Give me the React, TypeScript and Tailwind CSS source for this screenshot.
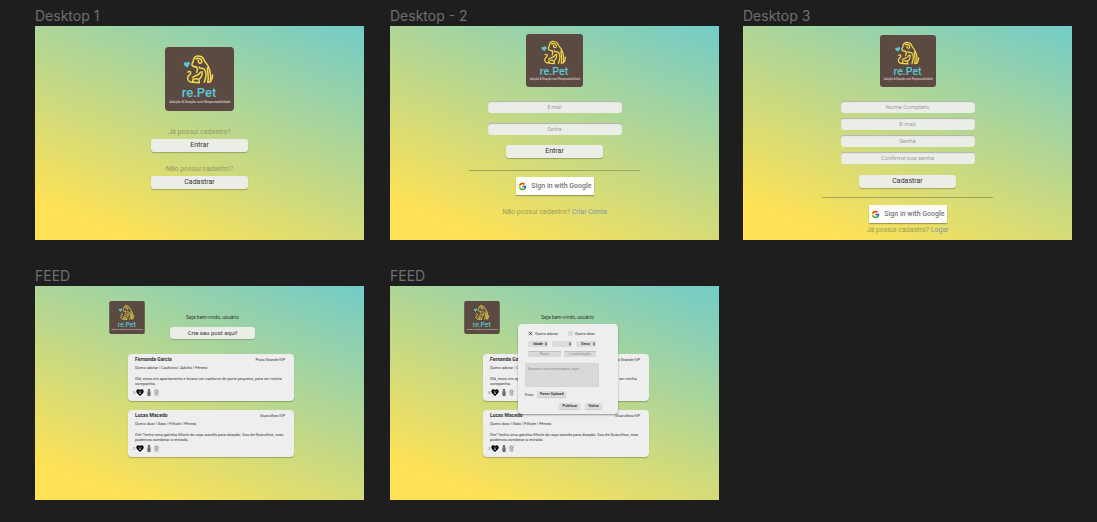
import type { ReactNode } from "react";
import { FcGoogle } from "react-icons/fc";

function Logo({ className }: { className: string }) {
  return (
    <svg viewBox="0 0 207 192" className={className} role="img" aria-label="re.Pet">
      <rect width="207" height="192" rx="11" fill="#5a4a42" />
      <path
        d="M67 62 L57 54 C54 47 61 43 65 48 C68 41 77 44 74 52 Z"
        fill="#5cc8d7"
      />
      <g fill="none" stroke="#f5d949" strokeWidth="4.500" strokeLinecap="round" strokeLinejoin="round">
        <path d="M95 60 C88 60 79 57 81 51 C82 47 85 46 85 40 C87 30 94 26 102 27 C112 28 116 34 118 41 C132 56 140 76 136 104 L128 106 C133 86 127 76 127 62" />
        <path d="M143 84 C143 93 140 100 136 104" />
        <path d="M93 36 C102 31 112 36 110 46 C106 52 98 48 100 40" />
        <path d="M93 60 C99 64 98 70 95 76 M103 60 C103 68 111 60 118 67 C126 76 124 90 118 106" />
        <path d="M69 75 C75 70 81 77 74 83 C65 89 66 100 76 105 L103 107 C104 97 96 93 88 96 C79 99 83 107 92 106" />
        <path d="M82 92 C88 84 103 86 106 76 L111 74 C113 84 107 93 101 97" />
      </g>
      <text x="102" y="149" textAnchor="middle" fill="#5cc8d7" fontFamily="Roboto, sans-serif" fontWeight="500" fontSize="39">
        re.Pet
      </text>
      <text x="105" y="168" textAnchor="middle" fill="#e4dfda" fontFamily="Roboto, sans-serif" fontSize="10">
        Adoção &amp; Doação com Responsabilidade
      </text>
    </svg>
  );
}

function Artboard({ title, className, children }: { title: string; className: string; children: ReactNode }) {
  return (
    <section className={className}>
      <h2 className="h-[18px] font-[Inter,sans-serif] text-[14px] leading-[15px] text-[#6f6f6f]">{title}</h2>
      <div className="aspect-[329/214] bg-[linear-gradient(21deg,#ffe255_11%,#72ccc8_100%)]">{children}</div>
    </section>
  );
}

function ActionButton({ children }: { children: string }) {
  return (
    <button className="h-[13px] w-[97px] rounded-[3px] bg-[#ebede7] text-[7px] leading-[13px] text-[#333333] shadow-[0_1px_1px_rgba(0,0,0,0.25)]">
      {children}
    </button>
  );
}

function Field({ label, type = "text", small = false }: { label: string; type?: string; small?: boolean }) {
  return (
    <input
      type={type}
      aria-label={label}
      placeholder={label}
      className={`block h-[12px] w-[134px] rounded-[3px] bg-[#ebede7] text-center leading-[12px] shadow-[inset_0_1px_1px_rgba(0,0,0,0.25)] outline-none placeholder:text-[#9d9e9a] ${
        small ? "text-[5px]" : "text-[6px]"
      }`}
    />
  );
}

function GoogleButton() {
  return (
    <button className="flex h-[18px] w-[78px] items-center justify-between bg-white pr-[2px] pl-[2px] text-[7px] font-medium text-[#757575] shadow-[0_1px_1px_rgba(0,0,0,0.3)]">
      <FcGoogle className="size-[9px]" />
      Sign in with Google
    </button>
  );
}

function AccountPrompt({ text, link }: { text: string; link: string }) {
  return (
    <p className="text-[7px] leading-[8px] text-[#9c9c55]">
      {text}{" "}
      <a href="#" className="text-[#8096a8]">
        {link}
      </a>
    </p>
  );
}

function Divider() {
  return <hr className="w-[171px] border-t border-[#a3a45c]" />;
}

function HeartPaw() {
  return (
    <svg viewBox="0 0 24 22" className="h-[7px] w-[8px]" aria-hidden="true">
      <path d="M12 22 L3 13 C-4 5 5 -4 12 3 C19 -4 28 5 21 13 Z" fill="#000" />
      <g fill="#d8d8d8">
        <ellipse cx="12" cy="13" rx="3" ry="2.5" />
        <circle cx="8" cy="9" r="1.2" />
        <circle cx="11" cy="7" r="1.2" />
        <circle cx="14" cy="7" r="1.2" />
        <circle cx="17" cy="9" r="1.2" />
      </g>
    </svg>
  );
}

function Bottle() {
  return (
    <svg viewBox="0 0 10 20" className="h-[7px] w-[4px]" aria-hidden="true">
      <path d="M3.5 1 H6.500 V5 L8 8 V19 H2 V8 L3.500 5 Z" fill="#bbb" stroke="#222" strokeWidth="2" />
      <path d="M2 12 H8" stroke="#222" strokeWidth="2" />
    </svg>
  );
}

function Bin() {
  return (
    <svg viewBox="0 0 16 20" className="h-[7px] w-[5px]" aria-hidden="true">
      <path d="M1 5 H15 M5 5 V2 H11 V5 M3 5 L4 18.500 H12 L13 5 M6.500 8 V16 M9.500 8 V16" fill="none" stroke="#777" strokeWidth="1.600" />
    </svg>
  );
}

type Post = { name: string; place: string; tags: string; message: string; likes: number };

const posts: Post[] = [
  {
    name: "Fernanda Garcia",
    place: "Praia Grande/SP",
    tags: "Quero adotar | Cachorro | Adulto | Fêmea",
    message: "Olá, moro em apartamento e busco um cachorro de porte pequeno, para ser minha companhia.",
    likes: 5,
  },
  {
    name: "Lucas Macedo",
    place: "Guarulhos/SP",
    tags: "Quero doar | Gato | Filhote | Fêmea",
    message: "Oie! Tenho uma gatinha filhote da raça siamês para doação. Sou de Guarulhos, mas podemos combinar a retirada.",
    likes: 2,
  },
];

function PostCard({ post }: { post: Post }) {
  return (
    <article className="h-[47px] rounded-[4px] bg-[#eeeeee] px-[7px] pt-[3px] text-[4px] leading-[5px] text-[#333333] shadow-[0_1px_1px_rgba(0,0,0,0.25)]">
      <header className="flex justify-between pr-[2px]">
        <h3 className="text-[5px] font-bold">{post.name}</h3>
        <span>{post.place}</span>
      </header>
      <p className="mt-[3px]">{post.tags}</p>
      <p className="mt-[6px]">{post.message}</p>
      <footer className="-ml-[2px] mt-[3px] flex items-center">
        <span className="text-[#666666]">{post.likes}</span>
        <button aria-label="Curtir" className="ml-[1px]">
          <HeartPaw />
        </button>
        <button aria-label="Doar ração" className="ml-[3px]">
          <Bottle />
        </button>
        <button aria-label="Excluir" className="ml-[3px]">
          <Bin />
        </button>
      </footer>
    </article>
  );
}

function Picker({ label, value }: { label: string; value: string }) {
  return (
    <div className="relative flex-1">
      <select
        aria-label={label}
        className="block h-[6px] w-full appearance-none rounded-[1px] bg-[#dcdcdc] pl-[5px] text-[4px] leading-[6px] font-semibold text-[#333333]"
      >
        <option>{value}</option>
      </select>
      <svg viewBox="0 0 6 10" className="pointer-events-none absolute top-[1px] right-[1px] h-[4px] w-[2px]" aria-hidden="true">
        <path d="M0 4 L3 0 L6 4 Z M0 6 L3 10 L6 6 Z" fill="#333" />
      </svg>
    </div>
  );
}

function CheckOption({ label, checked = false }: { label: string; checked?: boolean }) {
  return (
    <label className="flex flex-1 items-center gap-[2px]">
      <span className="relative flex size-[5px]">
        <input
          type="checkbox"
          defaultChecked={checked}
          className="peer size-[5px] appearance-none rounded-[1px] bg-[#dadada]"
        />
        <svg viewBox="0 0 10 10" className="pointer-events-none absolute inset-0 hidden size-[5px] peer-checked:block" aria-hidden="true">
          <path d="M2.500 2.500 L7.500 7.500 M7.500 2.500 L2.500 7.500" stroke="#222" strokeWidth="1.500" />
        </svg>
      </span>
      {label}
    </label>
  );
}

function SmallInput({ label }: { label: string }) {
  return (
    <input
      aria-label={label}
      placeholder={label}
      className="h-[6px] w-full min-w-0 flex-1 rounded-[1px] bg-[#dadada] text-center text-[4px] leading-[6px] shadow-[inset_0_1px_0_rgba(0,0,0,0.12)] placeholder:text-[#8c8c8c]"
    />
  );
}

function SmallButton({ children }: { children: string }) {
  return (
    <button className="h-[6px] rounded-[1px] bg-[#dcdcdc] px-[3px] text-[4px] leading-[6px] font-semibold shadow-[0_1px_1px_rgba(0,0,0,0.15)]">
      {children}
    </button>
  );
}

function Composer() {
  return (
    <form className="h-[90px] w-[100px] rounded-[4px] bg-[#eeeeee] px-[7px] pt-[7px] text-[4px] leading-[5px] text-[#333333] shadow-[0_1px_2px_rgba(0,0,0,0.4)]">
      <div className="mx-[3px] w-[80px]">
        <div className="flex">
          <CheckOption label="Quero adotar" checked />
          <CheckOption label="Quero doar" />
        </div>
        <div className="mt-[5px] flex w-[68px] gap-[4px]">
          <Picker label="Idade" value="Idade" />
          <Picker label="Porte" value="" />
          <Picker label="Sexo" value="Sexo" />
        </div>
        <div className="mt-[4px] flex w-[68px] gap-[3px]">
          <SmallInput label="Raça" />
          <SmallInput label="Localização" />
        </div>
      </div>
      <textarea
        aria-label="Mensagem"
        placeholder="Escreva sua mensagem aqui."
        className="mt-[6px] block h-[24px] w-[74px] resize-none rounded-[3px] bg-[#d9d9d9] px-[3px] py-[3px] text-[4px] leading-[5px] shadow-[inset_0_0_1px_rgba(0,0,0,0.25)] placeholder:text-[#8c8c8c]"
      />
      <div className="mt-[4px] flex items-center gap-[3px]">
        <span>Foto:</span>
        <SmallButton>Fazer Upload</SmallButton>
      </div>
      <div className="mt-[6px] flex justify-end gap-[5px] pr-[9px]">
        <SmallButton>Publicar</SmallButton>
        <SmallButton>Voltar</SmallButton>
      </div>
    </form>
  );
}

function Feed({ composing = false }: { composing?: boolean }) {
  return (
    <div className="pt-[15px] pr-[70px] pl-[74px]">
      <div className="flex h-[53px] gap-[25px]">
        <Logo className="h-[33px] w-[36px]" />
        <div className="flex w-[85px] flex-col items-center pt-[12px]">
          <p className="text-[5px] leading-[8px] whitespace-nowrap text-[#333333]">Seja bem-vindo, usuário</p>
          <div className="relative mt-[6px] h-[12px] w-full">
            {composing ? (
              <div className="absolute -top-[3px] -left-[7px] z-10">
                <Composer />
              </div>
            ) : (
              <button className="block h-[12px] w-full rounded-[3px] bg-[#ebede7] text-[6px] leading-[12px] text-[#333333] shadow-[0_1px_1px_rgba(0,0,0,0.2)]">
                Crie seu post aqui!
              </button>
            )}
          </div>
        </div>
      </div>
      <div className="ml-[19px] flex flex-col gap-[9px]">
        {posts.map((post) => (
          <PostCard key={post.name} post={post} />
        ))}
      </div>
    </div>
  );
}

export default function App() {
  return (
    <main className="min-h-screen bg-[#1e1e1e] pt-[8px] pr-[25px] pl-[35px] font-[Roboto,sans-serif]">
      <div className="grid grid-cols-[1fr_26px_1fr_24px_1fr] gap-y-[28px]">
        <Artboard title="Desktop 1" className="col-start-1">
          <div className="flex flex-col items-center pt-[21px]">
            <Logo className="h-[64px] w-[69px]" />
            <p className="mt-[17px] mb-[3px] text-[7px] leading-[8px] text-[#929a66]">Já possui cadastro?</p>
            <ActionButton>Entrar</ActionButton>
            <p className="mt-[13px] mb-[3px] text-[7px] leading-[8px] text-[#929a66]">Não possui cadastro?</p>
            <ActionButton>Cadastrar</ActionButton>
          </div>
        </Artboard>
        <Artboard title="Desktop - 2" className="col-start-3">
          <form className="flex flex-col items-center pt-[8px]">
            <Logo className="h-[53px] w-[57px]" />
            <div className="mt-[14px] mb-[10px] flex flex-col gap-[10px]">
              <Field label="E-mail" type="email" small />
              <Field label="Senha" type="password" small />
            </div>
            <ActionButton>Entrar</ActionButton>
            <div className="mt-[12px] mb-[6px]">
              <Divider />
            </div>
            <GoogleButton />
            <div className="mt-[13px]">
              <AccountPrompt text="Não possui cadastro?" link="Criar Conta" />
            </div>
          </form>
        </Artboard>
        <Artboard title="Desktop 3" className="col-start-5">
          <form className="flex flex-col items-center pt-[9px]">
            <Logo className="h-[52px] w-[56px]" />
            <div className="mt-[14px] mb-[11px] flex flex-col gap-[5px]">
              <Field label="Nome Completo" />
              <Field label="E-mail" type="email" />
              <Field label="Senha" type="password" />
              <Field label="Confirme sua senha" type="password" />
            </div>
            <ActionButton>Cadastrar</ActionButton>
            <div className="mt-[9px] mb-[7px]">
              <Divider />
            </div>
            <GoogleButton />
            <div className="mt-[3px]">
              <AccountPrompt text="Já possui cadastro?" link="Logar" />
            </div>
          </form>
        </Artboard>
        <Artboard title="FEED" className="col-start-1">
          <Feed />
        </Artboard>
        <Artboard title="FEED" className="col-start-3">
          <Feed composing />
        </Artboard>
      </div>
    </main>
  );
}
